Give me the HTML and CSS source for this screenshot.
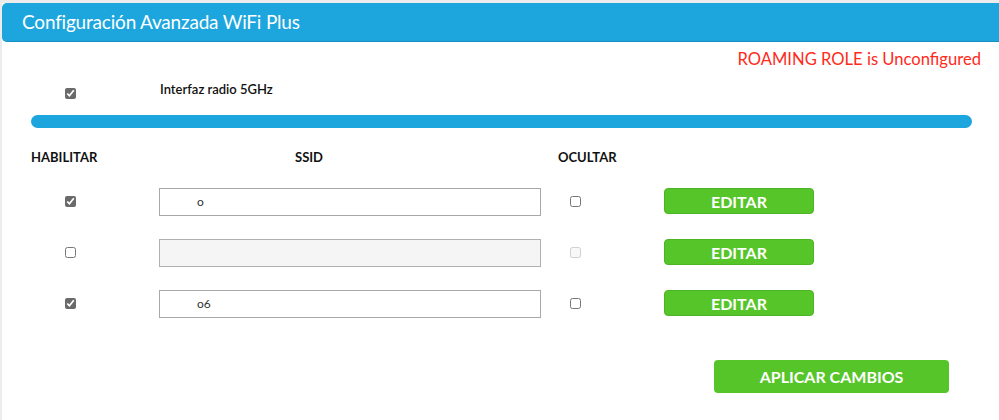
FILE: index.html
```html
<!DOCTYPE html>
<html lang="es">
<head>
<meta charset="utf-8">
<title>Configuración Avanzada WiFi Plus</title>
<link rel="stylesheet" href="styles.css">
</head>
<body>
<div class="page">
  <div class="header">Configuración Avanzada WiFi Plus</div>
  <div class="content">
    <div class="roaming">ROAMING ROLE is Unconfigured</div>
    <div class="radio-row">
      <div class="cell-check"><input type="checkbox" class="cb" checked></div>
      <div class="radio-label">Interfaz radio 5GHz</div>
    </div>
    <div class="bar"></div>
    <div class="table">
      <div class="th th-enable">HABILITAR</div>
      <div class="th th-ssid">SSID</div>
      <div class="th th-hide">OCULTAR</div>
      <div class="th"></div>

      <div class="td td-check"><input type="checkbox" class="cb" checked></div>
      <div class="td"><input type="text" class="ssid" value="o"></div>
      <div class="td td-hide"><input type="checkbox" class="cb"></div>
      <div class="td"><button class="btn-edit">EDITAR</button></div>

      <div class="td td-check"><input type="checkbox" class="cb"></div>
      <div class="td"><input type="text" class="ssid" value="" disabled></div>
      <div class="td td-hide"><input type="checkbox" class="cb" disabled></div>
      <div class="td"><button class="btn-edit">EDITAR</button></div>

      <div class="td td-check"><input type="checkbox" class="cb" checked></div>
      <div class="td"><input type="text" class="ssid" value="o6"></div>
      <div class="td td-hide"><input type="checkbox" class="cb"></div>
      <div class="td"><button class="btn-edit">EDITAR</button></div>
    </div>
    <div class="actions">
      <button class="btn-apply">APLICAR CAMBIOS</button>
    </div>
  </div>
</div>
</body>
</html>
```

FILE: styles.css
```css
html, body {
  margin: 0;
  padding: 0;
  background: #ececec;
  font-family: Lato, "Open Sans", sans-serif;
}

.page {
  margin: 3px 0 0 2px;
  background: #ffffff;
  height: 417px;
}

.header {
  height: 38px;
  background: #1ca6dd;
  border-bottom: 1px solid #178fc0;
  border-radius: 5px 0 0 5px;
  color: #ffffff;
  font-size: 19px;
  letter-spacing: -0.2px;
  line-height: 38px;
  padding-left: 20px;
}

.content {
  padding: 0 27px 0 29px;
}

.roaming {
  color: #ff2a1a;
  font-size: 16.6px;
  line-height: 22px;
  text-align: right;
  margin: 6px -9px 0 0;
}

.radio-row {
  display: flex;
  align-items: flex-start;
  height: 24px;
  margin-top: 11px;
}

.cell-check {
  width: 78px;
  padding-top: 7px;
  display: flex;
  justify-content: center;
}

.radio-label {
  margin-left: 51px;
  font-size: 13px;
  font-weight: 600;
  line-height: 16px;
  color: #111;
}

.cb {
  width: 11px;
  height: 11px;
  margin: 0;
  accent-color: #6a6a6a;
}

.bar {
  height: 13px;
  background: #1ca6dd;
  border-radius: 7px;
  margin-top: 10px;
}

.table {
  display: grid;
  grid-template-columns: 78px 449px 106px 150px;
  grid-template-rows: 20px repeat(3, 51px);
  margin-top: 19px;
  align-items: center;
}

.th {
  font-size: 13px;
  font-weight: 700;
  color: #111;
  line-height: 20px;
}

.th-ssid {
  margin-left: 186px;
}

.td {
  display: flex;
  align-items: center;
  margin-top: 18px;
}

.td-check {
  justify-content: center;
}

.td-hide {
  padding-left: 12px;
}

.ssid {
  margin-left: 50px;
  width: 382px;
  height: 28px;
  box-sizing: border-box;
  border: 1px solid #a8a8a8;
  padding: 0 0 0 37px;
  font-family: Lato, "Open Sans", sans-serif;
  font-size: 12px;
  color: #333;
  background: #ffffff;
  outline: none;
}

.ssid:disabled {
  background: #f5f5f5;
  border-color: #b0b0b0;
}

.btn-edit {
  width: 150px;
  height: 26px;
  box-sizing: border-box;
  background: #55c529;
  border: 1px solid #4db524;
  border-radius: 4px;
  color: #ffffff;
  font-family: Lato, "Open Sans", sans-serif;
  font-size: 16px;
  font-weight: 700;
  padding: 0;
  margin-top: -1px;
}

.actions {
  display: flex;
  justify-content: flex-end;
  margin-top: 40px;
  margin-right: 23px;
}

.btn-apply {
  width: 235px;
  height: 33px;
  background: #55c529;
  border: none;
  border-radius: 4px;
  color: #ffffff;
  font-family: Lato, "Open Sans", sans-serif;
  font-size: 16px;
  font-weight: 700;
  padding: 0;
}
```
